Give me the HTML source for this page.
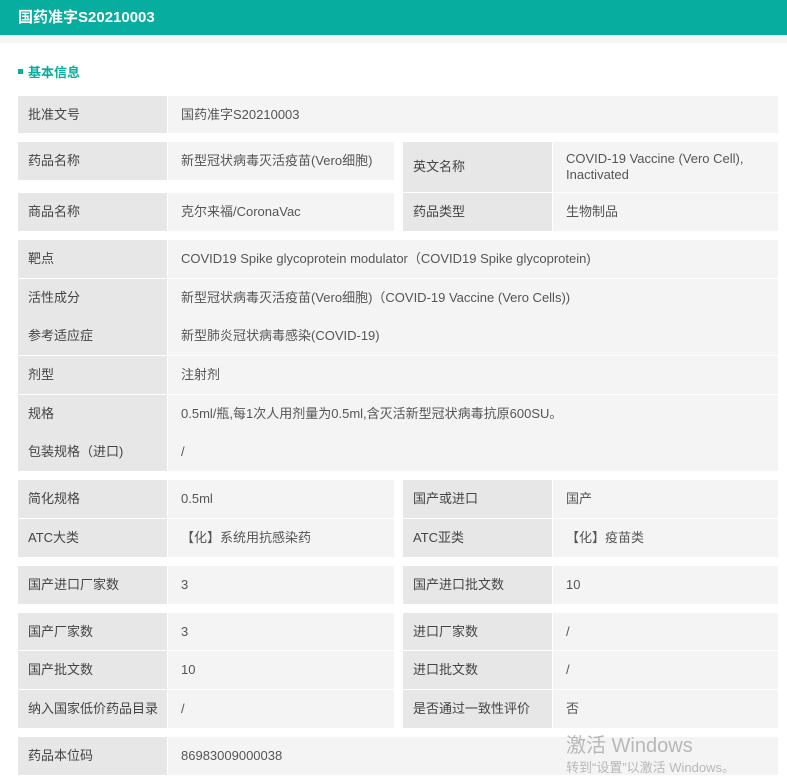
<!DOCTYPE html>
<html><head><meta charset="utf-8"><style>
*{margin:0;padding:0;box-sizing:border-box}
body{width:787px;height:780px;background:#fff;position:relative;overflow:hidden;font-family:"Liberation Sans","Noto Sans CJK SC",sans-serif;font-size:13px;color:#444}
.hd{position:absolute;left:0;top:0;width:787px;height:35px;background:#07ad9e;color:#fff;font-weight:bold;font-size:15px;line-height:35px;padding-left:18px}
.band{position:absolute;left:0;top:35px;width:787px;height:8px;background:#f5f5f5}
.sec{position:absolute;left:18px;top:62px;color:#07ad9e;font-weight:bold;font-size:13px}
.sec i{display:inline-block;width:5px;height:5px;background:#07ad9e;margin-right:5px;vertical-align:middle;position:relative;top:-2px}
.c{position:absolute;line-height:16px;display:flex;align-items:center}
.l{background:#e7e7e7;padding-left:10px;color:#444}
.v{background:#f4f4f4;padding-left:13px;color:#555}
.wm{position:absolute;color:#b8b8b8}
</style></head><body>
<div class="hd">国药准字S20210003</div>
<div class="band"></div>
<div class="sec"><i></i>基本信息</div>

<div class="c l" style="left:18px;top:96px;width:149px;height:37px">批准文号</div>
<div class="c v" style="left:168px;top:96px;width:610px;height:37px">国药准字S20210003</div>

<div class="c l" style="left:18px;top:142px;width:149px;height:38px">药品名称</div>
<div class="c v" style="left:168px;top:142px;width:226px;height:38px">新型冠状病毒灭活疫苗(Vero细胞)</div>
<div class="c l" style="left:403px;top:142px;width:149px;height:50px">英文名称</div>
<div class="c v" style="left:553px;top:142px;width:225px;height:50px">COVID-19 Vaccine (Vero Cell),<br>Inactivated</div>
<div class="c l" style="left:18px;top:193px;width:149px;height:38px">商品名称</div>
<div class="c v" style="left:168px;top:193px;width:226px;height:38px">克尔来福/CoronaVac</div>
<div class="c l" style="left:403px;top:193px;width:149px;height:38px">药品类型</div>
<div class="c v" style="left:553px;top:193px;width:225px;height:38px">生物制品</div>

<div class="c l" style="left:18px;top:240px;width:149px;height:38px">靶点</div>
<div class="c v" style="left:168px;top:240px;width:610px;height:38px">COVID19 Spike glycoprotein modulator（COVID19 Spike glycoprotein)</div>
<div class="c l" style="left:18px;top:279px;width:149px;height:38px">活性成分</div>
<div class="c v" style="left:168px;top:279px;width:610px;height:38px">新型冠状病毒灭活疫苗(Vero细胞)（COVID-19 Vaccine (Vero Cells))</div>
<div class="c l" style="left:18px;top:317px;width:149px;height:38px">参考适应症</div>
<div class="c v" style="left:168px;top:317px;width:610px;height:38px">新型肺炎冠状病毒感染(COVID-19)</div>
<div class="c l" style="left:18px;top:356px;width:149px;height:38px">剂型</div>
<div class="c v" style="left:168px;top:356px;width:610px;height:38px">注射剂</div>
<div class="c l" style="left:18px;top:395px;width:149px;height:38px">规格</div>
<div class="c v" style="left:168px;top:395px;width:610px;height:38px">0.5ml/瓶,每1次人用剂量为0.5ml,含灭活新型冠状病毒抗原600SU。</div>
<div class="c l" style="left:18px;top:433px;width:149px;height:38px">包装规格（进口)</div>
<div class="c v" style="left:168px;top:433px;width:610px;height:38px">/</div>

<div class="c l" style="left:18px;top:480px;width:149px;height:38px">简化规格</div>
<div class="c v" style="left:168px;top:480px;width:226px;height:38px">0.5ml</div>
<div class="c l" style="left:403px;top:480px;width:149px;height:38px">国产或进口</div>
<div class="c v" style="left:553px;top:480px;width:225px;height:38px">国产</div>
<div class="c l" style="left:18px;top:519px;width:149px;height:38px">ATC大类</div>
<div class="c v" style="left:168px;top:519px;width:226px;height:38px">【化】系统用抗感染药</div>
<div class="c l" style="left:403px;top:519px;width:149px;height:38px">ATC亚类</div>
<div class="c v" style="left:553px;top:519px;width:225px;height:38px">【化】疫苗类</div>

<div class="c l" style="left:18px;top:566px;width:149px;height:38px">国产进口厂家数</div>
<div class="c v" style="left:168px;top:566px;width:226px;height:38px">3</div>
<div class="c l" style="left:403px;top:566px;width:149px;height:38px">国产进口批文数</div>
<div class="c v" style="left:553px;top:566px;width:225px;height:38px">10</div>

<div class="c l" style="left:18px;top:613px;width:149px;height:37px">国产厂家数</div>
<div class="c v" style="left:168px;top:613px;width:226px;height:37px">3</div>
<div class="c l" style="left:403px;top:613px;width:149px;height:37px">进口厂家数</div>
<div class="c v" style="left:553px;top:613px;width:225px;height:37px">/</div>
<div class="c l" style="left:18px;top:651px;width:149px;height:38px">国产批文数</div>
<div class="c v" style="left:168px;top:651px;width:226px;height:38px">10</div>
<div class="c l" style="left:403px;top:651px;width:149px;height:38px">进口批文数</div>
<div class="c v" style="left:553px;top:651px;width:225px;height:38px">/</div>
<div class="c l" style="left:18px;top:690px;width:149px;height:38px">纳入国家低价药品目录</div>
<div class="c v" style="left:168px;top:690px;width:226px;height:38px">/</div>
<div class="c l" style="left:403px;top:690px;width:149px;height:38px">是否通过一致性评价</div>
<div class="c v" style="left:553px;top:690px;width:225px;height:38px">否</div>

<div class="c l" style="left:18px;top:737px;width:149px;height:38px">药品本位码</div>
<div class="c v" style="left:168px;top:737px;width:610px;height:38px">86983009000038</div>

<div class="wm" style="left:566px;top:729px;font-size:20px">激活 Windows</div>
<div class="wm" style="left:566px;top:757px;font-size:13px">转到“设置”以激活 Windows。</div>
</body></html>
